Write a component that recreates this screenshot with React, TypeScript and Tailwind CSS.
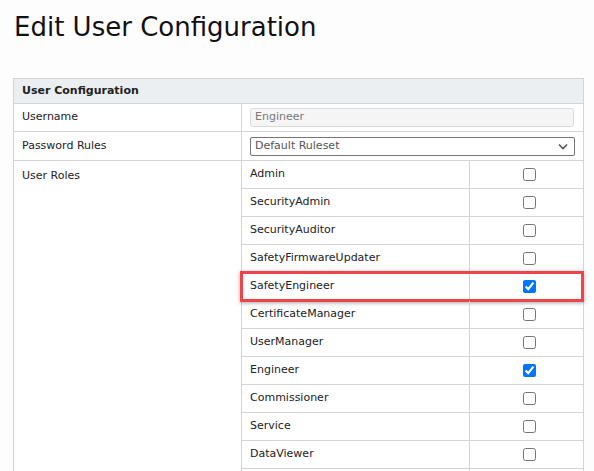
import React from 'react';

const roles: { name: string; checked: boolean; highlight?: boolean }[] = [
  { name: 'Admin', checked: false },
  { name: 'SecurityAdmin', checked: false },
  { name: 'SecurityAuditor', checked: false },
  { name: 'SafetyFirmwareUpdater', checked: false },
  { name: 'SafetyEngineer', checked: true, highlight: true },
  { name: 'CertificateManager', checked: false },
  { name: 'UserManager', checked: false },
  { name: 'Engineer', checked: true },
  { name: 'Commissioner', checked: false },
  { name: 'Service', checked: false },
  { name: 'DataViewer', checked: false },
];

function RoleRow({ name, checked, highlight }: { name: string; checked: boolean; highlight?: boolean }) {
  return (
    <div className="relative flex h-[28px] border-b border-[#d4d4d4]">
      <div className="flex w-[228px] items-center border-r border-[#d4d4d4] pl-[8px] text-[#222]">{name}</div>
      <div className="flex flex-1 items-center justify-center pl-[6px]">
        <input type="checkbox" checked={checked} readOnly className="m-0 h-[13px] w-[13px]" />
      </div>
      {highlight && (
        <div className="pointer-events-none absolute left-[-2px] right-[-1px] top-[-2px] bottom-[-2px] border-[3px] border-[#f2434a] shadow-[0_1px_4px_rgba(0,0,0,0.35)]" />
      )}
    </div>
  );
}

export default function App() {
  return (
    <div className="min-h-[471px] bg-[#fdfdfd] pt-[11px] text-[11px] text-[#222]" style={{ fontFamily: '"DejaVu Sans", Verdana, sans-serif' }}>
      <h1 className="ml-[14px] text-[26px] leading-[32px] font-normal text-[#111]">Edit User Configuration</h1>

      <div className="ml-[13px] mt-[35px] w-[571px] border border-[#d4d4d4] bg-white">
        <div className="flex h-[25px] items-center border-b border-[#d4d4d4] bg-[#eceff1] pl-[8px] font-bold text-[#222]">
          User Configuration
        </div>

        <div className="flex h-[28px] border-b border-[#d4d4d4]">
          <div className="flex w-[228px] items-center border-r border-[#d4d4d4] pl-[8px]">Username</div>
          <div className="flex flex-1 items-center pl-[8px] pr-[9px]">
            <div className="flex h-[19px] w-full items-center rounded-[3px] border border-[#dcdcdc] bg-[#f5f5f5] pl-[4px] text-[#7a7a7a]">
              Engineer
            </div>
          </div>
        </div>

        <div className="flex h-[29px] border-b border-[#d4d4d4]">
          <div className="flex w-[228px] items-center border-r border-[#d4d4d4] pl-[8px]">Password Rules</div>
          <div className="flex flex-1 items-center pl-[8px] pr-[8px]">
            <div className="flex h-[19px] w-full items-center justify-between rounded-[2px] border border-[#767676] bg-white pl-[4px] pr-[6px] text-[#555]">
              <span>Default Ruleset</span>
              <svg width="10" height="7" viewBox="0 0 10 7" fill="none">
                <path d="M1 1.5 5 5.5 9 1.5" stroke="#555" strokeWidth="1.6" />
              </svg>
            </div>
          </div>
        </div>

        <div className="flex">
          <div className="w-[228px] border-r border-[#d4d4d4] pl-[8px] pt-[7px]">User Roles</div>
          <div className="flex-1">
            {roles.map(r => (
              <RoleRow key={r.name} {...r} />
            ))}
            <div className="flex h-[28px]">
              <div className="w-[228px] border-r border-[#d4d4d4]" />
            </div>
          </div>
        </div>
      </div>
    </div>
  );
}
